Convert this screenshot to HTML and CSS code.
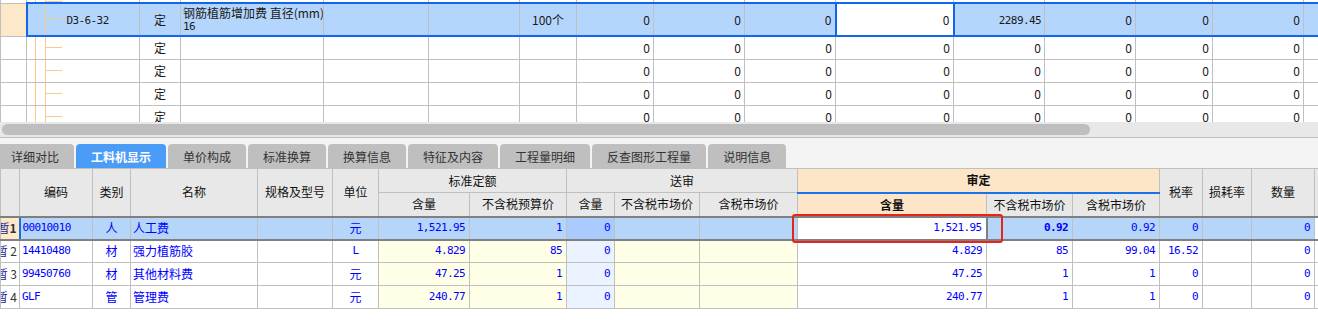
FILE: index.html
```html
<!DOCTYPE html>
<html lang="zh-CN">
<head>
  <meta charset="UTF-8" />
  <title>工料机显示</title>
  <link rel="stylesheet" href="styles.css">
</head>
<body>
  <div class="upper">
    <table class="quota">
      <colgroup>
        <col class="w26"><col class="w113"><col class="w41"><col class="w143"><col class="w105">
        <col class="w91"><col class="w57"><col class="w77"><col class="w91"><col class="w91">
        <col class="w118"><col class="w91"><col class="w91"><col class="w77"><col class="w91"><col class="w60">
      </colgroup>
      <tr class="stub">
        <td></td><td class="tree"></td><td></td><td></td><td></td><td></td><td></td><td></td>
        <td></td><td></td><td></td><td></td><td></td><td></td><td></td><td></td>
      </tr>
      <tr class="sel">
        <td class="peach"></td>
        <td class="tree first"><span class="mono">D3-6-32</span></td>
        <td class="c">定</td>
        <td class="name">钢筋植筋增加费 直径(mm)<br><span class="mono">16</span></td>
        <td></td>
        <td></td>
        <td class="c">100个</td>
        <td class="r">0</td>
        <td class="r">0</td>
        <td class="r">0</td>
        <td class="r focus">0</td>
        <td class="r"><span class="mono">2289.45</span></td>
        <td class="r">0</td>
        <td class="r">0</td>
        <td class="r">0</td>
        <td></td>
      </tr>
      <tr>
        <td></td><td class="tree"></td><td class="c">定</td><td></td><td></td><td></td><td></td>
        <td class="r">0</td><td class="r">0</td><td class="r">0</td><td class="r">0</td>
        <td class="r">0</td><td class="r">0</td><td class="r">0</td><td class="r">0</td><td></td>
      </tr>
      <tr>
        <td></td><td class="tree"></td><td class="c">定</td><td></td><td></td><td></td><td></td>
        <td class="r">0</td><td class="r">0</td><td class="r">0</td><td class="r">0</td>
        <td class="r">0</td><td class="r">0</td><td class="r">0</td><td class="r">0</td><td></td>
      </tr>
      <tr>
        <td></td><td class="tree"></td><td class="c">定</td><td></td><td></td><td></td><td></td>
        <td class="r">0</td><td class="r">0</td><td class="r">0</td><td class="r">0</td>
        <td class="r">0</td><td class="r">0</td><td class="r">0</td><td class="r">0</td><td></td>
      </tr>
      <tr>
        <td></td><td class="tree"></td><td class="c">定</td><td></td><td></td><td></td><td></td>
        <td class="r">0</td><td class="r">0</td><td class="r">0</td><td class="r">0</td>
        <td class="r">0</td><td class="r">0</td><td class="r">0</td><td class="r">0</td><td></td>
      </tr>
    </table>
  </div>

  <div class="hscroll"><div class="thumb"></div></div>

  <div class="tabs">
    <div class="tab first">详细对比</div>
    <div class="tab active">工料机显示</div>
    <div class="tab">单价构成</div>
    <div class="tab">标准换算</div>
    <div class="tab">换算信息</div>
    <div class="tab">特征及内容</div>
    <div class="tab">工程量明细</div>
    <div class="tab">反查图形工程量</div>
    <div class="tab">说明信息</div>
  </div>

  <div class="lower">
    <table class="res">
      <colgroup>
        <col class="w19"><col class="w73"><col class="w38"><col class="w127"><col class="w75"><col class="w46">
        <col class="w91"><col class="w97"><col class="w48"><col class="w85"><col class="w98">
        <col class="w189"><col class="w86"><col class="w87"><col class="w43"><col class="w49"><col class="w63"><col class="w40">
      </colgroup>
      <tr class="h1">
        <th rowspan="2"></th>
        <th rowspan="2">编码</th>
        <th rowspan="2">类别</th>
        <th rowspan="2">名称</th>
        <th rowspan="2">规格及型号</th>
        <th rowspan="2">单位</th>
        <th colspan="2">标准定额</th>
        <th colspan="3">送审</th>
        <th colspan="3" class="audit">审定</th>
        <th rowspan="2">税率</th>
        <th rowspan="2">损耗率</th>
        <th rowspan="2">数量</th>
        <th rowspan="2"></th>
      </tr>
      <tr class="h2">
        <th>含量</th>
        <th>不含税预算价</th>
        <th>含量</th>
        <th>不含税市场价</th>
        <th>含税市场价</th>
        <th class="audit-qty">含量</th>
        <th>不含税市场价</th>
        <th>含税市场价</th>
      </tr>
      <tr class="cur">
        <td class="rh peach"><div><span class="tag">暂</span> <b>1</b></div></td>
        <td class="code first">00010010</td>
        <td class="c">人</td>
        <td class="nm">人工费</td>
        <td></td>
        <td class="c">元</td>
        <td class="n">1,521.95</td>
        <td class="n">1</td>
        <td class="n sq">0</td>
        <td></td>
        <td></td>
        <td class="n edit">1,521.95</td>
        <td class="n strong">0.92</td>
        <td class="n">0.92</td>
        <td class="n">0</td>
        <td></td>
        <td class="n">0</td>
        <td class="blank"></td>
      </tr>
      <tr>
        <td class="rh"><div><span class="tag">暂</span> 2</div></td>
        <td class="code">14410480</td>
        <td class="c">材</td>
        <td class="nm">强力植筋胶</td>
        <td></td>
        <td class="c mono">L</td>
        <td class="n std">4.829</td>
        <td class="n std">85</td>
        <td class="n sq">0</td>
        <td class="std"></td>
        <td class="std"></td>
        <td class="n">4.829</td>
        <td class="n">85</td>
        <td class="n">99.04</td>
        <td class="n">16.52</td>
        <td></td>
        <td class="n">0</td>
        <td class="blank"></td>
      </tr>
      <tr>
        <td class="rh"><div><span class="tag">暂</span> 3</div></td>
        <td class="code">99450760</td>
        <td class="c">材</td>
        <td class="nm">其他材料费</td>
        <td></td>
        <td class="c">元</td>
        <td class="n std">47.25</td>
        <td class="n std">1</td>
        <td class="n sq">0</td>
        <td class="std"></td>
        <td class="std"></td>
        <td class="n">47.25</td>
        <td class="n">1</td>
        <td class="n">1</td>
        <td class="n">0</td>
        <td></td>
        <td class="n">0</td>
        <td class="blank"></td>
      </tr>
      <tr>
        <td class="rh"><div><span class="tag">暂</span> 4</div></td>
        <td class="code">GLF</td>
        <td class="c">管</td>
        <td class="nm">管理费</td>
        <td></td>
        <td class="c">元</td>
        <td class="n std">240.77</td>
        <td class="n std">1</td>
        <td class="n sq">0</td>
        <td class="std"></td>
        <td class="std"></td>
        <td class="n">240.77</td>
        <td class="n">1</td>
        <td class="n">1</td>
        <td class="n">0</td>
        <td></td>
        <td class="n">0</td>
        <td class="blank"></td>
      </tr>
    </table>
    <div class="mark"></div>
  </div>
</body>
</html>
```

FILE: styles.css
```css
* {
  box-sizing: border-box;
}
body {
  margin: 0;
  width: 1318px;
  height: 336px;
  overflow: hidden;
  background-color: #ffffff;
  color: #1a1a1a;
  font-family: "Noto Sans CJK SC", sans-serif;
  font-size: 12px;
}
table {
  border-collapse: collapse;
  table-layout: fixed;
}
td, th {
  border: 1px solid #c0c0c0;
  padding: 0 3px;
  white-space: nowrap;
  overflow: hidden;
  line-height: 14px;
}
.mono {
  font-family: "DejaVu Sans Mono", monospace;
  font-size: 11px;
  letter-spacing: -0.6px;
}
.c { text-align: center; }
.r { text-align: right; }

/* column widths */
.w19 { width: 19px; }
.w26 { width: 26px; }
.w38 { width: 38px; }
.w40 { width: 40px; }
.w41 { width: 41px; }
.w43 { width: 43px; }
.w46 { width: 46px; }
.w48 { width: 48px; }
.w49 { width: 49px; }
.w57 { width: 57px; }
.w60 { width: 60px; }
.w63 { width: 63px; }
.w73 { width: 73px; }
.w75 { width: 75px; }
.w77 { width: 77px; }
.w85 { width: 85px; }
.w86 { width: 86px; }
.w87 { width: 87px; }
.w91 { width: 91px; }
.w97 { width: 97px; }
.w98 { width: 98px; }
.w105 { width: 105px; }
.w113 { width: 113px; }
.w118 { width: 118px; }
.w127 { width: 127px; }
.w143 { width: 143px; }
.w189 { width: 189px; }

/* upper grid */
.upper {
  height: 122px;
  overflow: hidden;
}
.quota {
  width: 1363px;
}
.quota td {
  height: 23px;
}
.quota .stub td {
  height: 3px;
  border-top: none;
}
.quota .sel td {
  height: 33px;
  background-color: #b4d6fc;
  border-top: 2px solid #1166ee;
  border-bottom: 2px solid #1166ee;
}
.quota .sel td.peach {
  background-color: #fde8c9;
  border-top: 1px solid #c0c0c0;
  border-bottom: 1px solid #c0c0c0;
}
.quota .sel td.first {
  border-left: 2px solid #1166ee;
}
.quota .sel td.focus {
  background-color: #ffffff;
  border-left: 2px solid #1166ee;
  border-right: 2px solid #1166ee;
}
.quota .name {
  line-height: 12px;
  padding-left: 2px;
}
.tree {
  padding-left: 39px;
  background-image:
    linear-gradient(#fcca8c, #fcca8c),
    linear-gradient(#fcca8c, #fcca8c),
    linear-gradient(#fcca8c, #fcca8c);
  background-size: 1px 100%, 1px 100%, 17px 1px;
  background-position: 8px 0, 18px 0, 18px 50%;
  background-repeat: no-repeat;
}
.quota .sel td.tree {
  background-image:
    linear-gradient(#fcca8c, #fcca8c),
    linear-gradient(#fcca8c, #fcca8c);
  background-size: 1px 100%, 17px 1px;
  background-position: 17px 0, 17px 50%;
}

/* scrollbar */
.hscroll {
  height: 16px;
  padding: 2px 0 0 2px;
  background-color: #e8e8e8;
  border-bottom: 1px solid #c0c0c0;
}
.thumb {
  width: 1088px;
  height: 11px;
  background-color: #bebebe;
  border-radius: 6px;
}

/* tabs */
.tabs {
  display: flex;
  gap: 2px;
  height: 30px;
  padding-top: 6px;
  background-color: #f4f4f4;
}
.tab {
  height: 24px;
  padding: 0 15px;
  display: flex;
  align-items: center;
  background-color: #bfbfbf;
  border-radius: 4px 4px 0 0;
  color: #333333;
}
.tab.first {
  margin-left: -4px;
}
.tab.active {
  background-color: #4a9cf7;
  color: #ffffff;
  font-weight: bold;
}

/* lower grid */
.lower {
  position: relative;
}
.res {
  width: 1354px;
}
.res th {
  height: 24px;
  background-color: #e8e8e8;
  font-weight: normal;
  color: #111111;
  padding: 0;
}
.res th.audit {
  background-color: #fde6c8;
  font-weight: bold;
  border-bottom: 2px solid #1a73e8;
}
.res th.audit-qty {
  background-color: #fde6c8;
  font-weight: bold;
}
.res td {
  height: 23px;
  color: #0000ff;
}
.res .n {
  text-align: right;
  font-family: "DejaVu Sans Mono", monospace;
  font-size: 11px;
  letter-spacing: -0.6px;
  padding-right: 4px;
}
.res .code {
  font-family: "DejaVu Sans Mono", monospace;
  font-size: 11px;
  letter-spacing: -0.6px;
  padding-left: 2px;
}
.res .nm {
  padding-left: 2px;
}
.res .std {
  background-color: #ffffe8;
}
.res .sq {
  background-color: #eaf3ff;
}
.res .rh {
  padding: 0 2px 0 0;
  color: #333333;
}
.res .rh div {
  display: flex;
  justify-content: flex-end;
  overflow: hidden;
  white-space: pre;
}
.res .rh .tag {
  color: #1b1b8f;
}
.res .rh.peach {
  background-color: #fde8c9;
}
.res .cur td {
  background-color: #b5d6f8;
  border-top: 2px solid #808080;
  border-bottom: 2px solid #808080;
}
.res .cur td.rh.peach {
  background-color: #fde8c9;
}
.res .cur td.first {
  border-left: 2px solid #1a6fe0;
}
.res .cur td.sq {
  background-color: #a9cbff;
}
.res .cur td.edit {
  background-color: #ffffff;
  border-right: 2px solid #808080;
}
.res .cur td.blank {
  background-color: #ffffff;
}
.res .strong {
  font-weight: bold;
}
.mark {
  position: absolute;
  left: 792px;
  top: 46px;
  width: 211px;
  height: 29px;
  border: 2px solid #e8231a;
  border-radius: 3px;
}
```
